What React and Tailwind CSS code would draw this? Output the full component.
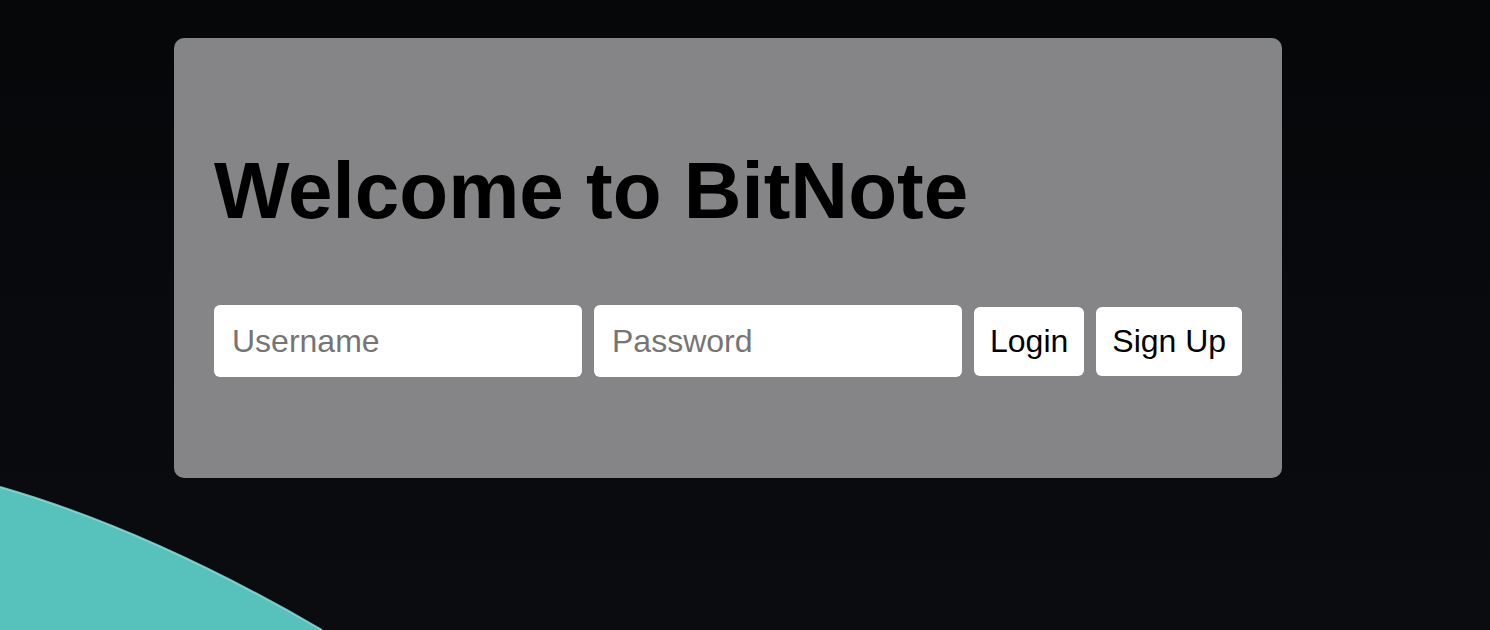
import { useState } from 'react'

const font = "font-['Liberation_Sans',Arial,sans-serif]"

export default function App() {
  const [username, setUsername] = useState('')
  const [password, setPassword] = useState('')

  return (
    <div className={`relative h-[630px] w-full overflow-hidden bg-gradient-to-b from-[#060709] to-[#0b0c10] ${font}`}>
      {/* teal wave in the corner */}
      <svg className="absolute left-0 top-0" width="1490" height="630" viewBox="0 0 1490 630">
        <path d="M0 487 Q 150 530 322 630 L0 630 Z" fill="#57c1bc" />
        <path d="M0 487 Q 150 530 322 630" fill="none" stroke="#8fe3de" strokeWidth="2" opacity="0.8" />
      </svg>

      <div className="relative ml-[174px] mt-[38px] w-[1108px] rounded-[10px] bg-[#858587] px-10 pt-[107px] pb-[101px]">
        <h1 className="text-[80px] font-bold leading-[92px] text-black">Welcome to BitNote</h1>

        <div className="mt-[68px] flex items-center gap-3">
          <input
            value={username}
            onChange={(e) => setUsername(e.target.value)}
            placeholder="Username"
            className="h-[72px] w-[368px] shrink-0 rounded-[6px] bg-white pl-[18px] text-[32px] text-black outline-none placeholder:text-[#757575]"
          />
          <input
            type="password"
            value={password}
            onChange={(e) => setPassword(e.target.value)}
            placeholder="Password"
            className="h-[72px] w-[368px] shrink-0 rounded-[6px] bg-white pl-[18px] text-[32px] text-black outline-none placeholder:text-[#757575]"
          />
          <button className="h-[69px] shrink-0 whitespace-nowrap rounded-[6px] bg-white px-4 text-[32px] text-black">Login</button>
          <button className="h-[69px] shrink-0 whitespace-nowrap rounded-[6px] bg-white px-4 text-[32px] text-black">Sign Up</button>
        </div>
      </div>
    </div>
  )
}
